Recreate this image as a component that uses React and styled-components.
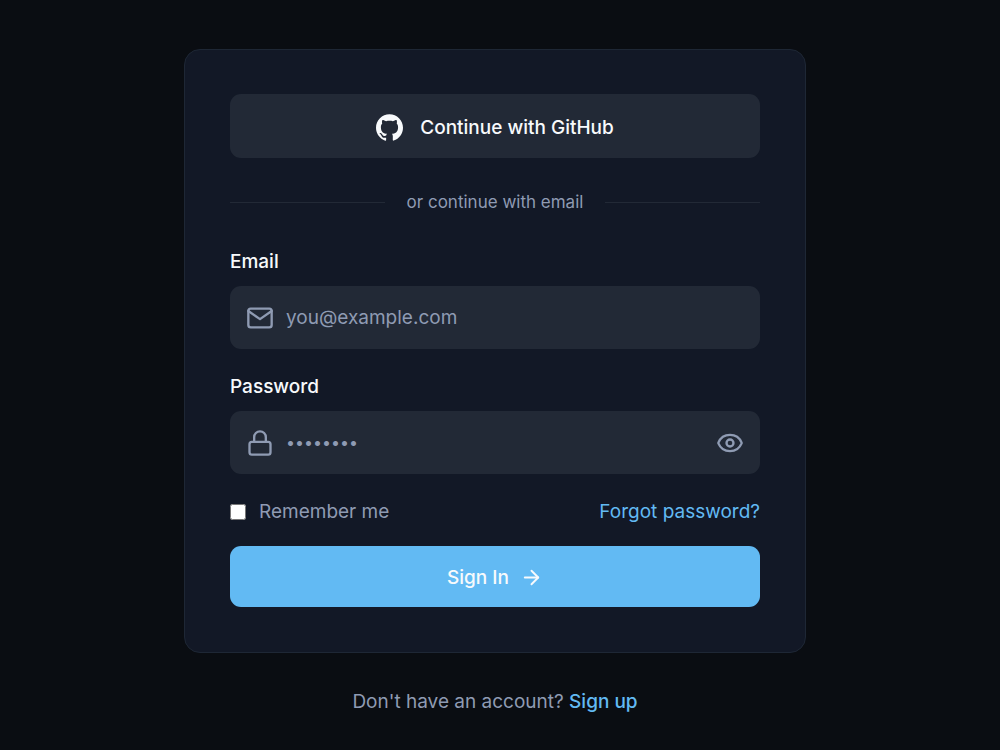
import React, { useState } from "react";
import styled, { createGlobalStyle, ThemeProvider } from "styled-components";
import { ArrowRight, Eye, EyeOff, Lock } from "lucide-react";
import { FiMail } from "react-icons/fi";

const theme = {
    pageBackground: "#0a0d12",
    cardBackground: "#121826",
    fieldBackground: "#222936",
    border: "#1e2735",
    textColor: "#f8fafc",
    mutedColor: "#8f9bb3",
    accent: "#62baf3",
};

const GlobalStyle = createGlobalStyle`
    * {
        box-sizing: border-box;
    }

    body {
        margin: 0;
        background-color: ${props => props.theme.pageBackground};
        color: ${props => props.theme.textColor};
        font-family: Inter, "Liberation Sans", sans-serif;
        font-size: 19px;
        line-height: 29px;
    }

    button, input {
        font: inherit;
    }
`;

const Page = styled.main`
    display: flex;
    flex-direction: column;
    align-items: center;
    gap: 34px;
    padding: 49px 10px 32px 0;
`;

const Card = styled.section`
    width: 100%;
    max-width: 622px;
    padding: 44px 45px 45px;
    border: 1px solid ${props => props.theme.border};
    border-radius: 16px;
    background-color: ${props => props.theme.cardBackground};
`;

const Button = styled.button`
    display: flex;
    justify-content: center;
    align-items: center;
    gap: ${props => (props.$primary ? "11px" : "17px")};
    width: 100%;
    padding: ${props => (props.$primary ? "16px 16px 14px" : "18px 18px 15px")};
    border: none;
    border-radius: 11px;
    background-color: ${props => (props.$primary ? props.theme.accent : props.theme.fieldBackground)};
    color: ${props => props.theme.textColor};
    font-weight: 500;
    line-height: 31px;
    cursor: pointer;
`;

const Divider = styled.div`
    display: flex;
    align-items: center;
    gap: 22px;
    margin: 32px 0 33px;
    color: ${props => props.theme.mutedColor};
    font-size: 17px;
    line-height: 24px;

    &::before,
    &::after {
        content: "";
        flex: 1;
        height: 1px;
        background-color: ${props => props.theme.fieldBackground};
    }
`;

const Field = styled.div`
    margin-bottom: 23px;
`;

const Label = styled.label`
    display: block;
    margin-bottom: 10px;
    font-weight: 500;
`;

const InputBox = styled.div`
    display: flex;
    align-items: center;
    gap: 12px;
    height: 63px;
    padding: 0 16px;
    border-radius: 11px;
    background-color: ${props => props.theme.fieldBackground};
    color: ${props => props.theme.mutedColor};

    svg {
        display: block;
        flex-shrink: 0;
    }
`;

const Input = styled.input`
    flex: 1;
    min-width: 0;
    padding: 0;
    border: none;
    outline: none;
    background: transparent;
    color: ${props => props.theme.textColor};
    font-size: ${props => (props.$masked ? "16px" : "19px")};

    &::placeholder {
        color: ${props => props.theme.mutedColor};
        opacity: 1;
    }
`;

const IconButton = styled.button`
    padding: 0;
    border: none;
    background: transparent;
    color: inherit;
    cursor: pointer;
`;

const Options = styled.div`
    display: flex;
    justify-content: space-between;
    align-items: center;
    margin-bottom: 20px;
`;

const Remember = styled.label`
    display: flex;
    align-items: center;
    gap: 13px;
    color: ${props => props.theme.mutedColor};
`;

const Checkbox = styled.input`
    width: 16px;
    height: 16px;
    margin: 0;
`;

const Link = styled.a`
    color: ${props => props.theme.accent};
    font-weight: ${props => (props.$strong ? 500 : 400)};
    text-decoration: none;
`;

const Footer = styled.p`
    margin: 0;
    color: ${props => props.theme.mutedColor};
`;

function GithubIcon() {
    return (
        <svg width="27" height="27" viewBox="0 0 24 24" fill="currentColor" aria-hidden="true">
            <path d="M12 .297c-6.63 0-12 5.373-12 12 0 5.303 3.438 9.8 8.205 11.385.6.113.82-.258.82-.577 0-.285-.01-1.04-.015-2.04-3.338.724-4.042-1.61-4.042-1.61C4.422 18.07 3.633 17.7 3.633 17.7c-1.087-.744.084-.729.084-.729 1.205.084 1.838 1.236 1.838 1.236 1.07 1.835 2.809 1.305 3.495.998.108-.776.417-1.305.76-1.605-2.665-.3-5.466-1.332-5.466-5.93 0-1.31.465-2.38 1.235-3.22-.135-.303-.54-1.523.105-3.176 0 0 1.005-.322 3.3 1.23.96-.267 1.98-.399 3-.405 1.02.006 2.04.138 3 .405 2.28-1.552 3.285-1.23 3.285-1.23.645 1.653.24 2.873.12 3.176.765.84 1.23 1.91 1.23 3.22 0 4.61-2.805 5.625-5.475 5.92.42.36.81 1.096.81 2.22 0 1.606-.015 2.896-.015 3.286 0 .315.21.69.825.57C20.565 22.092 24 17.592 24 12.297c0-6.627-5.373-12-12-12" />
        </svg>
    );
}

function App() {
    const [showPassword, setShowPassword] = useState(false);

    const eye = showPassword ? <EyeOff size={28} /> : <Eye size={28} />;

    return (
        <ThemeProvider theme={theme}>
            <GlobalStyle />
            <Page>
                <Card>
                    <Button type="button">
                        <GithubIcon />
                        Continue with GitHub
                    </Button>
                    <Divider>or continue with email</Divider>
                    <form onSubmit={event => event.preventDefault()}>
                        <Field>
                            <Label htmlFor="email">Email</Label>
                            <InputBox>
                                <FiMail size={28} />
                                <Input id="email" type="email" placeholder="you@example.com" />
                            </InputBox>
                        </Field>
                        <Field>
                            <Label htmlFor="password">Password</Label>
                            <InputBox>
                                <Lock size={28} />
                                <Input
                                    id="password"
                                    type={showPassword ? "text" : "password"}
                                    placeholder="••••••••"
                                    $masked
                                />
                                <IconButton
                                    type="button"
                                    aria-label="Toggle password visibility"
                                    onClick={() => setShowPassword(!showPassword)}
                                >
                                    {eye}
                                </IconButton>
                            </InputBox>
                        </Field>
                        <Options>
                            <Remember>
                                <Checkbox type="checkbox" />
                                Remember me
                            </Remember>
                            <Link href="#forgot">Forgot password?</Link>
                        </Options>
                        <Button type="submit" $primary>
                            Sign In
                            <ArrowRight size={23} />
                        </Button>
                    </form>
                </Card>
                <Footer>
                    Don't have an account? <Link href="#signup" $strong>Sign up</Link>
                </Footer>
            </Page>
        </ThemeProvider>
    );
}

export default App;
